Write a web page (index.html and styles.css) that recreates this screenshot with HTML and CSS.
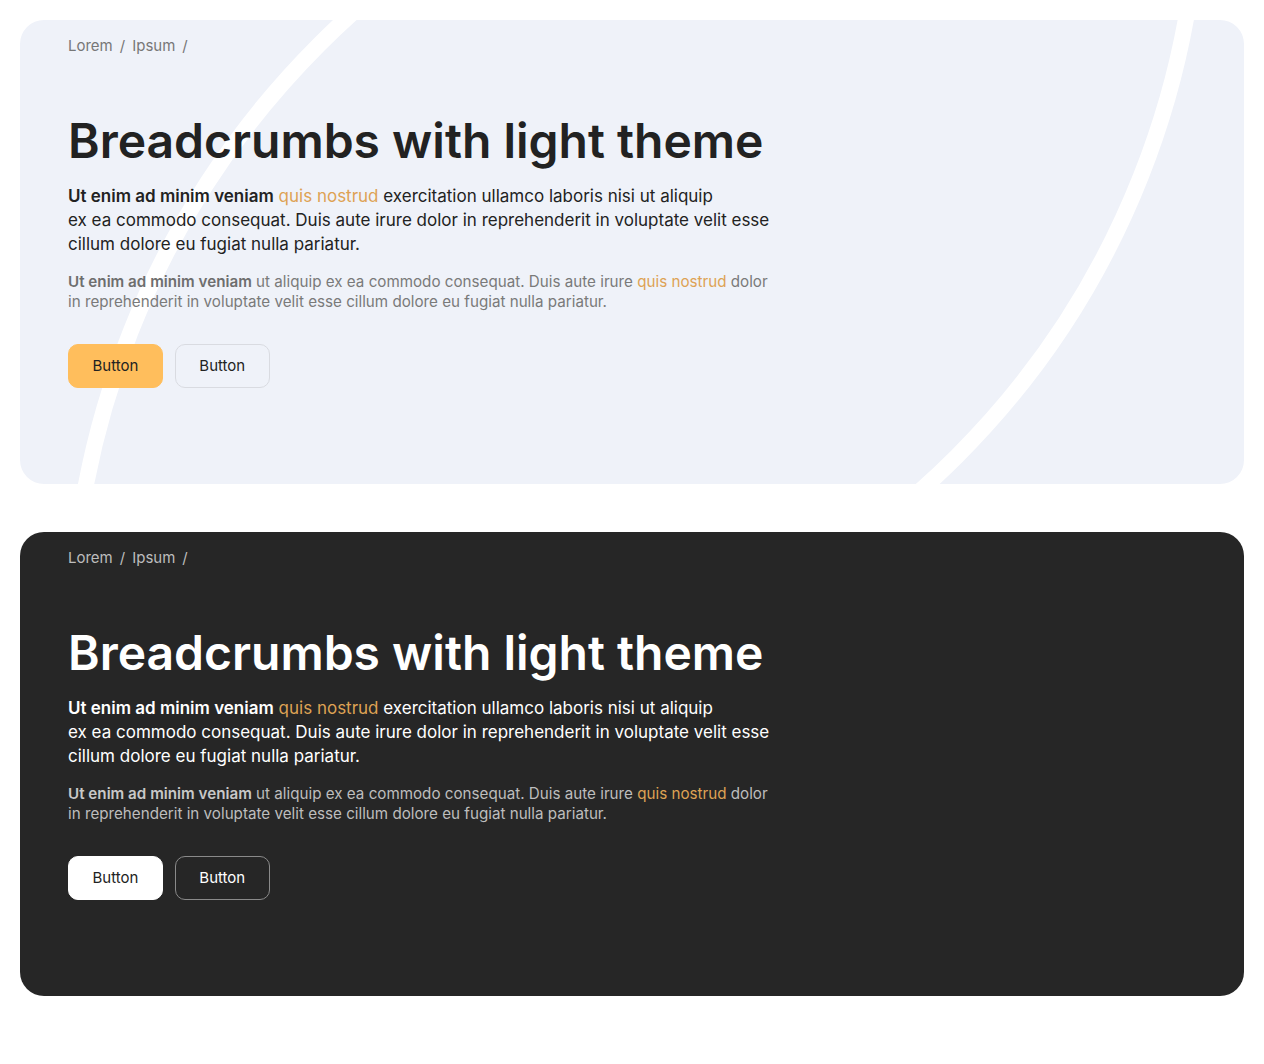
FILE: index.html
```html
<!DOCTYPE html>
<html lang="en">
<head>
<meta charset="utf-8">
<title>Breadcrumbs</title>
<link rel="stylesheet" href="styles.css">
</head>
<body>
<main class="page">
  <section class="hero hero-light">
    <svg class="hero-deco" viewBox="0 0 1224 464" width="1224" height="464" aria-hidden="true">
      <circle cx="899" cy="624" r="848" fill="none" stroke="#ffffff" stroke-width="16"/>
      <circle cx="353" cy="-148" r="826" fill="none" stroke="#ffffff" stroke-width="16"/>
    </svg>
    <div class="hero-inner">
      <nav class="crumbs"><a class="crumb">Lorem</a><span class="sep">/</span><a class="crumb">Ipsum</a><span class="sep">/</span></nav>
      <h1 class="title">Breadcrumbs with light theme</h1>
      <p class="lead"><strong>Ut enim ad minim veniam</strong> <span class="accent">quis nostrud</span> exercitation ullamco laboris nisi ut aliquip<br>ex ea commodo consequat. Duis aute irure dolor in reprehenderit in voluptate velit esse cillum dolore eu fugiat nulla pariatur.</p>
      <p class="sub"><strong>Ut enim ad minim veniam</strong> ut aliquip ex ea commodo consequat. Duis aute irure <span class="accent">quis nostrud</span> dolor in reprehenderit in voluptate velit esse cillum dolore eu fugiat nulla pariatur.</p>
      <div class="actions">
        <button class="btn btn-primary">Button</button>
        <button class="btn btn-outline">Button</button>
      </div>
    </div>
  </section>

  <section class="hero hero-dark">
    <div class="hero-inner">
      <nav class="crumbs"><a class="crumb">Lorem</a><span class="sep">/</span><a class="crumb">Ipsum</a><span class="sep">/</span></nav>
      <h1 class="title">Breadcrumbs with light theme</h1>
      <p class="lead"><strong>Ut enim ad minim veniam</strong> <span class="accent">quis nostrud</span> exercitation ullamco laboris nisi ut aliquip<br>ex ea commodo consequat. Duis aute irure dolor in reprehenderit in voluptate velit esse cillum dolore eu fugiat nulla pariatur.</p>
      <p class="sub"><strong>Ut enim ad minim veniam</strong> ut aliquip ex ea commodo consequat. Duis aute irure <span class="accent">quis nostrud</span> dolor in reprehenderit in voluptate velit esse cillum dolore eu fugiat nulla pariatur.</p>
      <div class="actions">
        <button class="btn btn-primary">Button</button>
        <button class="btn btn-outline">Button</button>
      </div>
    </div>
  </section>
</main>
</body>
</html>
```

FILE: styles.css
```css
* { box-sizing: border-box; }

html, body {
  margin: 0;
  padding: 0;
  background: #ffffff;
}

body {
  font-family: Inter, "Noto Sans", "Liberation Sans", sans-serif;
  color: #222222;
}

.page {
  padding: 20px;
  display: flex;
  flex-direction: column;
  gap: 48px;
}

.hero {
  position: relative;
  overflow: hidden;
  border-radius: 24px;
  height: 464px;
}

.hero-light { background: #eff2f9; }
.hero-dark { background: #262626; }

.hero-deco {
  position: absolute;
  left: 0;
  top: 0;
  display: block;
}

.hero-inner {
  position: relative;
  padding: 17px 48px 0;
}

.crumbs {
  display: flex;
  align-items: center;
  gap: 7px;
  font-size: 15px;
  line-height: 18px;
  color: #777777;
}

.crumb { color: inherit; text-decoration: none; }

.title {
  margin: 57px 0 0;
  font-size: 48px;
  line-height: 58px;
  font-weight: 600;
  color: #222222;
}

.lead {
  margin: 14px 0 0;
  max-width: 710px;
  font-size: 17px;
  line-height: 24px;
  color: #222222;
}

.lead strong { font-weight: 600; }

.sub {
  margin: 16px 0 0;
  max-width: 710px;
  font-size: 15.2px;
  line-height: 20px;
  color: #7a7a7a;
}

.sub strong { font-weight: 600; color: #6e6e6e; }

.accent { color: #dea254; }

.actions {
  margin-top: 32px;
  display: flex;
  gap: 12px;
}

.btn {
  height: 44px;
  padding: 0 23.5px;
  border-radius: 10px;
  font-family: inherit;
  font-size: 15px;
  line-height: 20px;
  cursor: pointer;
}

.hero-light .btn-primary {
  background: #ffbe5c;
  border: 1px solid #ffbe5c;
  color: #222222;
}

.hero-light .btn-outline {
  background: transparent;
  border: 1px solid #d9dbe1;
  color: #222222;
}

.hero-dark .crumbs { color: #bdbdbd; }
.hero-dark .title { color: #ffffff; }
.hero-dark .lead { color: #ffffff; }
.hero-dark .sub { color: #bdbdbd; }
.hero-dark .sub strong { color: #c8c8c8; }

.hero-dark .btn-primary {
  background: #ffffff;
  border: 1px solid #ffffff;
  color: #222222;
}

.hero-dark .btn-outline {
  background: transparent;
  border: 1px solid #8a8a8a;
  color: #ffffff;
}
```
